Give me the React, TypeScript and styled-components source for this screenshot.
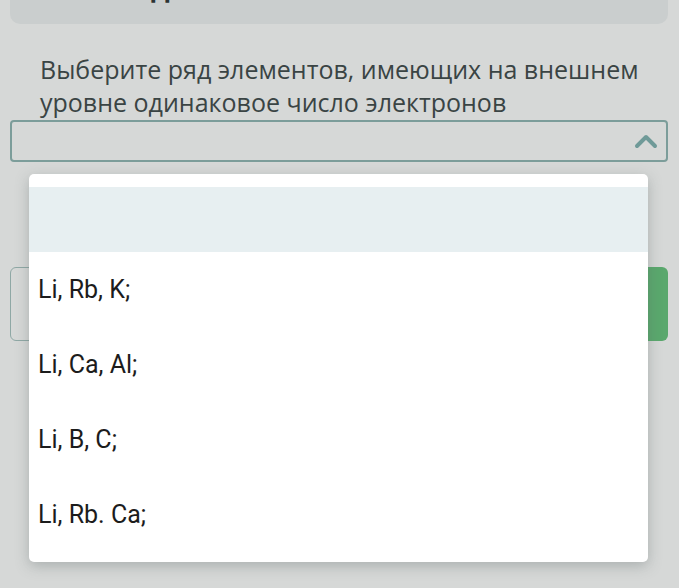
import styled, { createGlobalStyle } from "styled-components";

const OPTIONS = ["Li, Rb, K;", "Li, Ca, Al;", "Li, B, C;", "Li, Rb. Ca;"];

const App = () => {
  return (
    <>
      <GlobalStyle />
      <Page>
        <HeaderCard>
          <HeaderTitle>Задание 4</HeaderTitle>
        </HeaderCard>
        <Question>
          Выберите ряд элементов, имеющих на внешнем уровне одинаковое число
          электронов
        </Question>
        <SelectWrap>
          <SelectBox>
            <Chevron viewBox="0 0 24 16">
              <path d="M3 13 L12 4 L21 13" />
            </Chevron>
          </SelectBox>
          <Menu>
            <Option selected />
            {OPTIONS.map((o) => (
              <Option key={o}>{o}</Option>
            ))}
          </Menu>
        </SelectWrap>
        <Actions>
          <OutlineButton />
          <GreenButton />
        </Actions>
      </Page>
    </>
  );
};

const GlobalStyle = createGlobalStyle`
  html, body {
    margin: 0;
    background: #d6d8d7;
  }
  body {
    font-family: "Open Sans", "Noto Sans", sans-serif;
  }
`;

const Page = styled.div`
  width: 679px;
  height: 588px;
  overflow: hidden;
  background: #d6d8d7;
`;

const HeaderCard = styled.div`
  margin: 0 11px 0 10px;
  height: 24px;
  background: #cacece;
  border-radius: 0 0 10px 10px;
  overflow: hidden;
`;

const HeaderTitle = styled.div`
  font-size: 28px;
  font-weight: 700;
  color: #2d3434;
  line-height: 28px;
  margin-top: -28px;
  padding-left: 106px;
`;

const Question = styled.div`
  margin: 29px 20px 0 40px;
  font-size: 25px;
  line-height: 33px;
  color: #3a4444;
`;

const SelectWrap = styled.div`
  position: relative;
  margin: 1px 11px 0 10px;
`;

const SelectBox = styled.div`
  height: 38px;
  border: 2px solid #7c9d9a;
  border-radius: 4px;
  display: flex;
  align-items: center;
  justify-content: flex-end;
  padding-right: 8px;
`;

const Chevron = styled.svg`
  width: 24px;
  height: 16px;
  fill: none;
  stroke: #6f9a98;
  stroke-width: 4;
  stroke-linecap: round;
  stroke-linejoin: round;
`;

const Menu = styled.div`
  position: absolute;
  top: 54px;
  left: 19px;
  width: 619px;
  padding: 13px 0 10px;
  background: #ffffff;
  border-radius: 5px;
  box-shadow: 0 4px 14px rgba(90, 100, 100, 0.35);
  z-index: 10;
`;

const Option = styled.div<{ selected?: boolean }>`
  height: ${(p) => (p.selected ? "65px" : "75px")};
  display: flex;
  align-items: center;
  padding-left: 9px;
  font-family: Roboto, "Noto Sans", sans-serif;
  font-size: 25px;
  color: #1c1c1c;
  background: ${(p) => (p.selected ? "#e7eff1" : "#ffffff")};
`;

const Actions = styled.div`
  display: flex;
  justify-content: space-between;
  margin: 105px 11px 0 10px;
`;

const OutlineButton = styled.div`
  width: 200px;
  height: 72px;
  border: 1px solid #8fa8a5;
  border-radius: 6px;
`;

const GreenButton = styled.div`
  width: 200px;
  height: 74px;
  background: #5aa86d;
  border-radius: 6px;
`;

export default App;
